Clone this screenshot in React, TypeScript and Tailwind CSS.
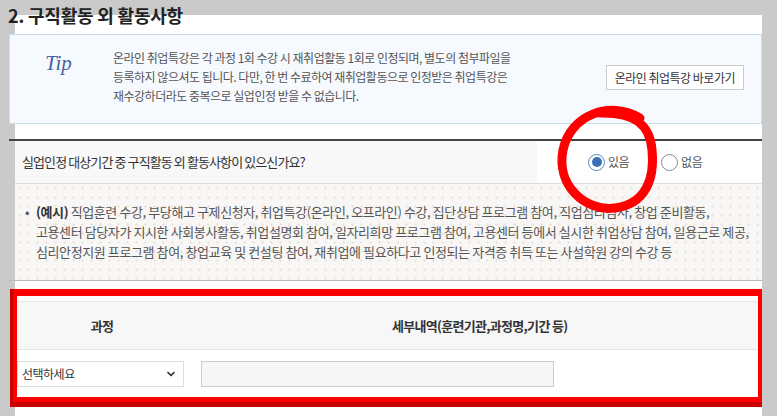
import { ChevronDown } from "lucide-react";

function Radio({ checked, label }: { checked?: boolean; label: string }) {
  return (
    <label className="flex items-center gap-[3px]">
      <span
        className={`flex h-[17px] w-[17px] items-center justify-center rounded-full border-[1.5px] bg-white ${
          checked ? "border-[#5b87c5]" : "border-[#8a8a8a]"
        }`}
      >
        {checked && <span className="h-[10px] w-[10px] rounded-full bg-[#3c6fb5]"></span>}
      </span>
      <span className="text-[12px] leading-none text-[#555]">{label}</span>
    </label>
  );
}

export default function App() {
  return (
    <div className="relative h-[416px] w-[777px] overflow-hidden bg-[#cacaca] bg-[linear-gradient(#fff,#fff)] bg-size-[747px_401px] bg-position-[15px_15px] bg-no-repeat font-['Noto_Sans_CJK_KR',sans-serif] tracking-[-0.5px]">
      {/* Title */}
      <h2 className="h-[34px] pl-[8px] pt-[3px] text-[18px] font-bold leading-[24px] tracking-[-0.2px] text-[#222]">
        2. 구직활동 외 활동사항
      </h2>

      <div className="ml-[9px] w-[753px]">
        {/* Tip box */}
        <div className="flex h-[90px] items-start border border-[#c6dfee] bg-[#f6faff]">
          <div className="w-[103px] pl-[35px] pt-[18px] font-['Liberation_Serif',serif] text-[21px] italic leading-none tracking-normal text-[#3f64a8]">
            Tip
          </div>
          <div className="pt-[13px] text-[12px] leading-[19px] text-[#555]">
            <p>온라인 취업특강은 각 과정 1회 수강 시 재취업활동 1회로 인정되며, 별도의 첨부파일을</p>
            <p>등록하지 않으셔도 됩니다. 다만, 한 번 수료하여 재취업활동으로 인정받은 취업특강은</p>
            <p>재수강하더라도 중복으로 실업인정 받을 수 없습니다.</p>
          </div>
          <button className="ml-auto mr-[17px] mt-[30px] h-[25px] border border-[#ccc] bg-white px-[8px] text-[12px] leading-none text-[#333]">
            온라인 취업특강 바로가기
          </button>
        </div>

        {/* Question */}
        <div className="mt-[15px] border-t-2 border-[#444]">
          <div className="ml-[6px] flex h-[43px] border-b border-[#ddd]">
            <div className="flex w-[522px] items-center bg-[#f8f8f8] pl-[7px] text-[13px] tracking-[-0.9px] text-[#333]">
              실업인정 대상기간 중 구직활동 외 활동사항이 있으신가요?
            </div>
            <div className="flex flex-1 items-center gap-[32px] bg-white pl-[51px]">
              <Radio checked label="있음" />
              <Radio label="없음" />
            </div>
          </div>
        </div>

        {/* Examples */}
        <div className="h-[97px] border-b border-[#bbb]">
          <div className="ml-[6px] flex h-full bg-[#f9f7f5] bg-[radial-gradient(#ebe5df_1px,transparent_1.3px)] bg-size-[9px_9px] pl-[10px] pt-[18px] text-[13px] leading-[20px] tracking-[-0.4px] text-[#555]">
            <span className="w-[11px]">•</span>
            <div className="whitespace-nowrap">
              <p>
                <b className="text-[#333]">(예시)</b> 직업훈련 수강, 부당해고 구제신청자, 취업특강(온라인, 오프라인) 수강, 집단상담 프로그램 참여, 직업심리검사, 창업 준비활동,
              </p>
              <p>고용센터 담당자가 지시한 사회봉사활동, 취업설명회 참여, 일자리희망 프로그램 참여, 고용센터 등에서 실시한 취업상담 참여, 일용근로 제공,</p>
              <p>심리안정지원 프로그램 참여, 창업교육 및 컨설팅 참여, 재취업에 필요하다고 인정되는 자격증 취득 또는 사설학원 강의 수강 등</p>
            </div>
          </div>
        </div>

        {/* Highlighted table */}
        <div className="ml-[1px] mt-[8px] h-[118px] w-[752px] bg-[#c80000] pb-[5px] pl-[3px]">
          <div className="h-full overflow-hidden border-b-[5px] border-l-[4px] border-r-[4px] border-t-[7px] border-[#ff0000] bg-white pt-[5px]">
            <div className="flex h-[49px] items-center border-y border-[#e6e6e6] bg-[#f7f7f7] text-[13px] font-semibold tracking-[-0.7px] text-[#333]">
              <div className="w-[170px] text-center">과정</div>
              <div className="pl-[205px]">세부내역(훈련기관,과정명,기간 등)</div>
            </div>
            <div className="flex gap-[17px] pt-[11px]">
              <div className="flex h-[26px] w-[167px] items-center justify-between border border-[#ddd] bg-white pl-[4px] pr-[6px] text-[12px] text-[#333]">
                <span>선택하세요</span>
                <ChevronDown size={12} strokeWidth={3.5} />
              </div>
              <div className="h-[26px] w-[353px] border border-[#ccc] bg-[#f6f6f6]"></div>
            </div>
          </div>
        </div>
      </div>

      {/* Hand-drawn annotation */}
      <svg className="pointer-events-none absolute left-0 top-0" width="777" height="416">
        <path
          d="M 640 118 C 610 100, 570 115, 563 150 C 556 185, 585 212, 615 208 C 645 204, 655 180, 652 150 C 650 125, 635 112, 600 113"
          fill="none"
          stroke="#ff0000"
          strokeWidth="9"
          strokeLinecap="round"
          style={{ filter: "blur(0.7px)" }}
        />
      </svg>
    </div>
  );
}
